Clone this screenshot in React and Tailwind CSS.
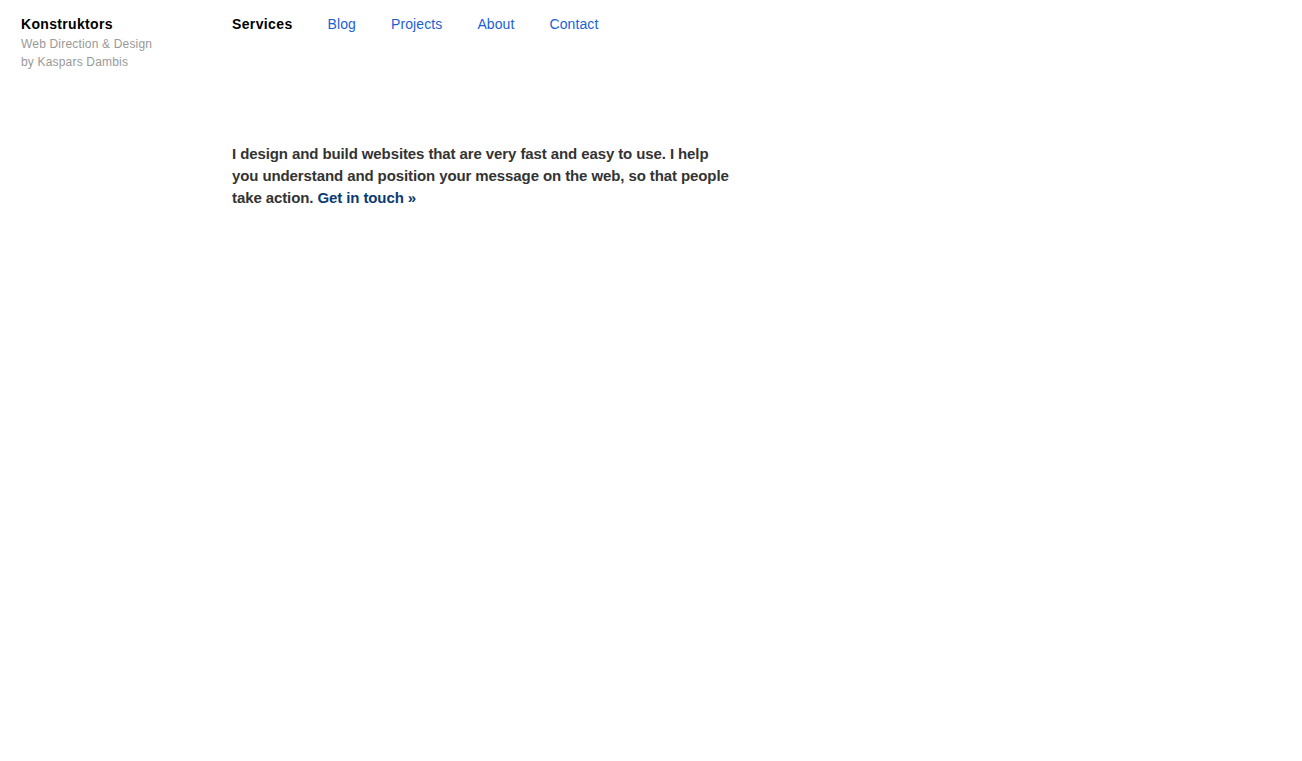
import React from 'react';

const nav = ['Blog', 'Projects', 'About', 'Contact'];

const App = () => {
  return (
    <div className="min-h-screen bg-white font-['Liberation_Sans',Arial,sans-serif]">
      <div className="flex px-[21px] pt-[15px]">
        <div className="w-[211px] shrink-0">
          <p className="text-[14px] font-bold leading-[18px] tracking-[0.33px] text-black">Konstruktors</p>
          <p className="mt-[2px] text-[12px] leading-[18px] tracking-[0.18px] text-[#999]">
            Web Direction &amp; Design
            <br />
            by Kaspars Dambis
          </p>
        </div>
        <div>
          <nav className="flex gap-[35px] text-[14px] leading-[18px] tracking-[0.1px]">
            <span className="font-bold tracking-[0.37px] text-black">Services</span>
            {nav.map((n) => (
              <a key={n} href="#" className="text-[#1a5fd6]">
                {n}
              </a>
            ))}
          </nav>
          <p className="mt-[110px] max-w-[500px] text-[15px] font-bold leading-[22px] tracking-[-0.1px] text-[#333]">
            I design and build websites that are very fast and easy to use. I help you
            understand and position your message on the web, so that people take action.{' '}
            <a href="#" className="text-[#0a3a72]">
              Get in touch »
            </a>
          </p>
        </div>
      </div>
    </div>
  );
};

export default App;
